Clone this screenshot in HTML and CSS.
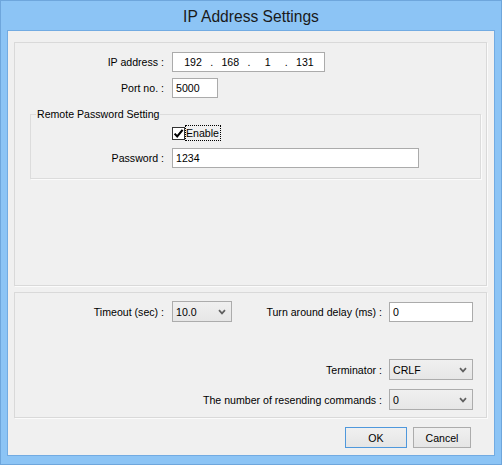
FILE: index.html
```html
<!DOCTYPE html>
<html>
<head>
<meta charset="utf-8">
<title>IP Address Settings</title>
<link rel="stylesheet" href="styles.css">
</head>
<body>
<div class="window">
  <div class="titlebar">IP Address Settings</div>
  <div class="client">
    <div class="panel panel-top">
      <div class="row">
        <span class="label">IP address :</span>
        <div class="field ipbox">
          <span class="seg">192</span><span class="dot">.</span><span class="seg">168</span><span class="dot">.</span><span class="seg">1</span><span class="dot">.</span><span class="seg">131</span>
        </div>
      </div>
      <div class="row row-port">
        <span class="label">Port no. :</span>
        <div class="field textbox port">5000</div>
      </div>
      <fieldset class="group">
        <legend>Remote Password Setting</legend>
        <div class="check-row">
          <span class="checkbox">
            <svg width="11" height="11" viewBox="0 0 11 11"><path d="M1.6 5.6 L4.2 8.4 L9.6 1.8" fill="none" stroke="#000" stroke-width="2.1"/></svg>
          </span>
          <span class="check-label">Enable</span>
        </div>
        <div class="row row-pw">
          <span class="label label-group">Password :</span>
          <div class="field textbox pw">1234</div>
        </div>
      </fieldset>
    </div>
    <div class="panel panel-bottom">
      <div class="split-row">
        <div class="row">
          <span class="label">Timeout (sec) :</span>
          <div class="field combo timeout"><span>10.0</span>
            <svg class="chev" width="8" height="6" viewBox="0 0 8 6"><path d="M1 1.2 L4 4.4 L7 1.2" fill="none" stroke="#606060" stroke-width="1.7"/></svg>
          </div>
        </div>
        <div class="row">
          <span class="label-r">Turn around delay (ms) :</span>
          <div class="field textbox wide">0</div>
        </div>
      </div>
      <div class="row row-r row-term">
        <span class="label-r">Terminator :</span>
        <div class="field combo wide"><span>CRLF</span>
          <svg class="chev" width="8" height="6" viewBox="0 0 8 6"><path d="M1 1.2 L4 4.4 L7 1.2" fill="none" stroke="#606060" stroke-width="1.7"/></svg>
        </div>
      </div>
      <div class="row row-r row-resend">
        <span class="label-r">The number of resending commands :</span>
        <div class="field combo wide"><span>0</span>
          <svg class="chev" width="8" height="6" viewBox="0 0 8 6"><path d="M1 1.2 L4 4.4 L7 1.2" fill="none" stroke="#606060" stroke-width="1.7"/></svg>
        </div>
      </div>
    </div>
    <div class="buttons">
      <div class="btn btn-default">OK</div>
      <div class="btn btn-cancel">Cancel</div>
    </div>
  </div>
</div>
</body>
</html>
```
FILE: styles.css
```css
* { box-sizing: border-box; }
html, body { margin: 0; padding: 0; }
body {
  width: 502px;
  height: 465px;
  font-family: "Liberation Sans", Arial, sans-serif;
  font-size: 10.6px;
  color: #000;
  background: #8cc4f5;
}
.window {
  width: 502px;
  height: 465px;
  border: 1px solid #6ea6dc;
  background: #8cc4f5;
  padding: 0 6px 8px 6px;
  display: flex;
  flex-direction: column;
}
.titlebar {
  height: 29px;
  line-height: 29px;
  text-align: center;
  font-size: 15.6px;
  color: #1a1a1a;
  padding-top: 1px;
}
.client {
  flex: 1;
  background: #f0f0f0;
  border: 1px solid #72abe2;
  padding: 11px 7px 0 6px;
  display: flex;
  flex-direction: column;
}
.panel {
  border: 1px solid #d9d9d9;
  box-shadow: 1px 1px 0 #fbfbfb;
}
.panel-top {
  height: 244px;
  padding-top: 9px;
}
.row {
  display: flex;
  align-items: center;
  height: 20px;
}
.label {
  width: 149px;
  text-align: right;
  margin-right: 8px;
  white-space: nowrap;
}
.label-group { width: 133px; }
.row-port { margin-top: 6px; }
.field {
  height: 20px;
  border: 1px solid #ababab;
  background: #fff;
  display: flex;
  align-items: center;
  white-space: nowrap;
  flex: none;
}
.textbox { padding-left: 3px; }
.ipbox {
  width: 153px;
  padding-left: 5px;
}
.seg { width: 30px; text-align: center; }
.dot { width: 7.3px; text-align: center; }
.port { width: 46px; }
.group {
  margin: 8px 5px 0 15px;
  padding: 0 0 10px 0;
  border: 1px solid #dcdcdc;
  box-shadow: 1px 1px 0 #fbfbfb;
}
.group legend {
  margin-left: 5px;
  padding: 0 1px;
  line-height: 16px;
  height: 16px;
}
.check-row {
  display: flex;
  align-items: center;
  height: 16px;
  margin-top: 3px;
  padding-left: 141px;
}
.checkbox {
  width: 13px;
  height: 13px;
  border: 1px solid #333;
  background: #fff;
  display: flex;
  align-items: center;
  justify-content: center;
}
.check-label {
  height: 16px;
  line-height: 14px;
  border: 1px dotted #000;
  padding: 0 1px 0 0;
}
.row-pw { margin-top: 7px; }
.pw { width: 247px; }
.panel-bottom {
  margin-top: 6px;
  height: 126px;
  padding: 8px 13px 0 0;
  display: flex;
  flex-direction: column;
}
.split-row {
  display: flex;
  justify-content: space-between;
  align-items: flex-start;
  height: 21px;
}
.split-row .row { height: 21px; }
.combo {
  height: 21px;
  background: linear-gradient(#f0f0f0, #e6e6e6);
  border-color: #acacac;
  padding: 1px 5px 0 3px;
  justify-content: space-between;
}
.timeout { width: 60px; }
.label-r {
  margin-right: 7px;
  white-space: nowrap;
}
.wide { width: 84px; }
.row-r { align-self: flex-end; height: 21px; }
.row-term { margin-top: 37px; }
.row-resend { margin-top: 9px; }
.buttons {
  display: flex;
  justify-content: flex-end;
  gap: 6px;
  margin-top: 9px;
  margin-right: 16px;
}
.btn {
  height: 21px;
  display: flex;
  align-items: center;
  justify-content: center;
  background: linear-gradient(#f0f0f0, #e5e5e5);
  border: 1px solid #acacac;
}
.btn-default { width: 62px; border-color: #4f98dc; }
.btn-cancel { width: 58px; }
```
